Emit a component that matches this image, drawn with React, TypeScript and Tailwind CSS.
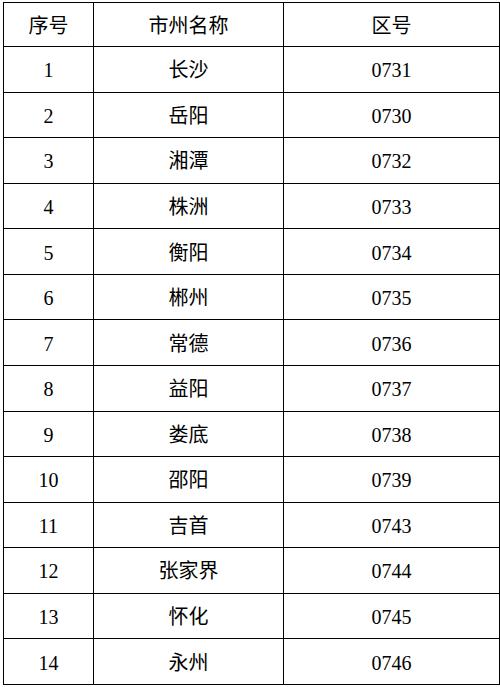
const rows = [
  { no: "1", name: "长沙", code: "0731" },
  { no: "2", name: "岳阳", code: "0730" },
  { no: "3", name: "湘潭", code: "0732" },
  { no: "4", name: "株洲", code: "0733" },
  { no: "5", name: "衡阳", code: "0734" },
  { no: "6", name: "郴州", code: "0735" },
  { no: "7", name: "常德", code: "0736" },
  { no: "8", name: "益阳", code: "0737" },
  { no: "9", name: "娄底", code: "0738" },
  { no: "10", name: "邵阳", code: "0739" },
  { no: "11", name: "吉首", code: "0743" },
  { no: "12", name: "张家界", code: "0744" },
  { no: "13", name: "怀化", code: "0745" },
  { no: "14", name: "永州", code: "0746" },
];

const cell = "flex items-center justify-center border-r border-b border-black pt-[2px]";

export default function App() {
  return (
    <div
      className="min-h-screen bg-white pt-[2px] pl-[3px] text-[20px] text-black"
      style={{ fontFamily: '"Liberation Serif", "Noto Sans CJK SC", serif' }}
    >
      <div className="grid w-[497px] grid-cols-[90px_190px_216px] border-l border-t border-black">
        {/* Header */}
        <div className={`${cell} h-[44px]`}>序号</div>
        <div className={`${cell} h-[44px]`}>市州名称</div>
        <div className={`${cell} h-[44px]`}>区号</div>

        {rows.map((r) => (
          <div key={r.no} className="contents">
            <div className={`${cell} h-[45.57px]`}>{r.no}</div>
            <div className={`${cell} h-[45.57px]`}>{r.name}</div>
            <div className={`${cell} h-[45.57px]`}>{r.code}</div>
          </div>
        ))}
      </div>
    </div>
  );
}
